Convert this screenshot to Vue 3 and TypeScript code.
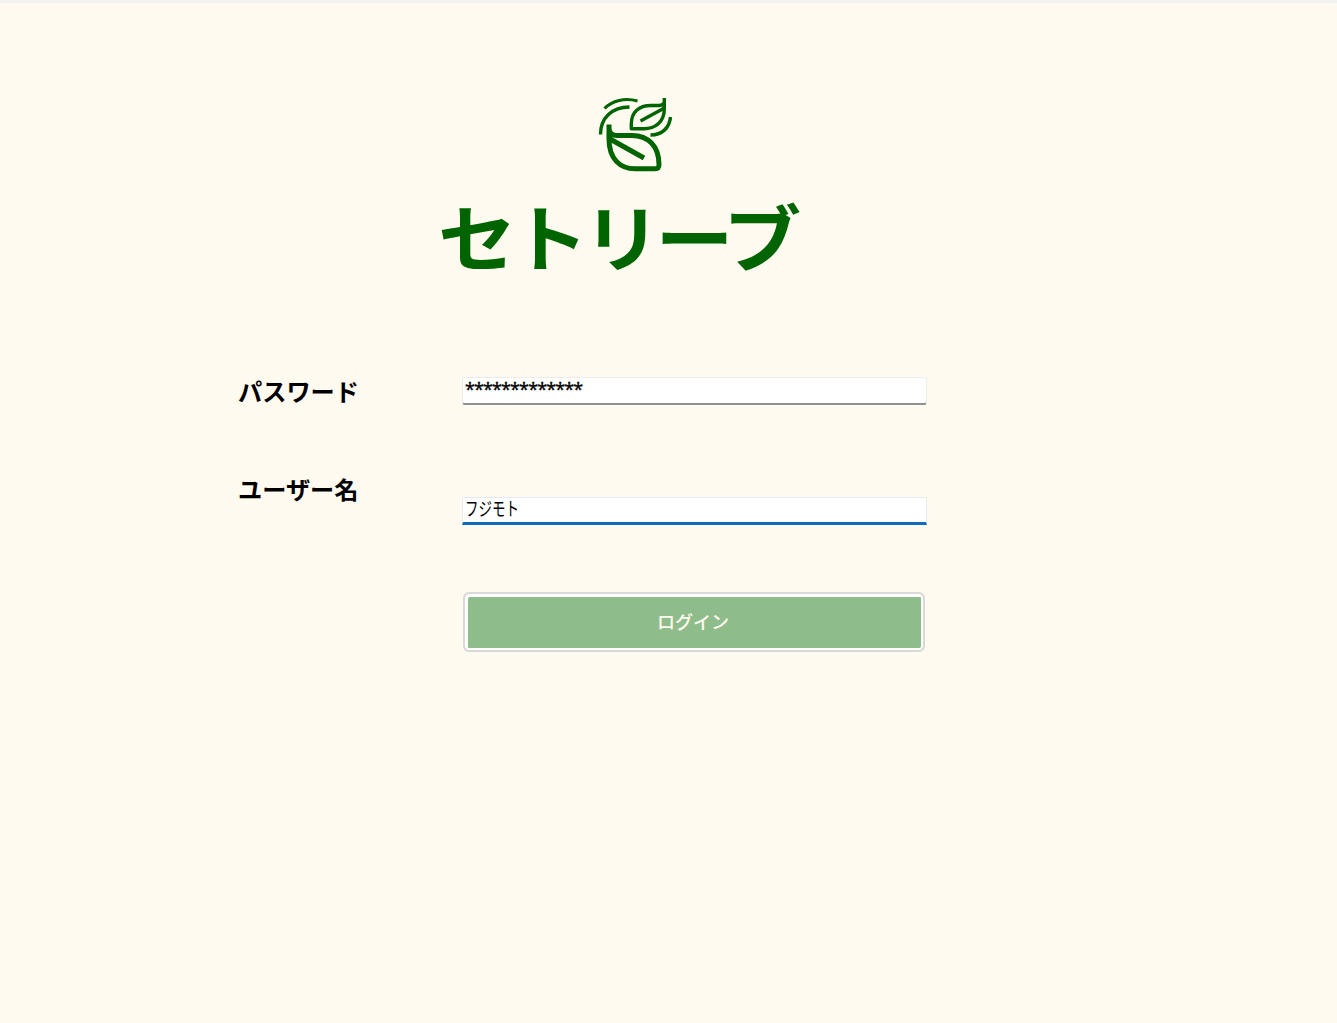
<script setup lang="ts">
import { ref } from 'vue'

const title = 'セトリーブ'
const password = ref('*************')
const userName = ref('フジモト')
</script>

<template>
  <main class="window">
    <header class="brand">
      <svg class="logo" viewBox="0 0 90 90" fill="none" stroke="#006400" stroke-linecap="butt" stroke-linejoin="round">
        <path stroke-width="3" d="M14.500 18.500C22 10.500 35 7.500 47.500 11" />
        <path stroke-width="3.400" d="M10.500 44.500C10.500 28 22 17 39.500 17" />
        <path stroke-width="3.400" d="M74.300 8V19C74.300 32 65 38.800 54 38.800H41.300V34C41.300 22 49 15.500 61 15.500H69C72 15.500 74.300 14 74.300 11" />
        <path stroke-width="3.400" d="M50.500 31L73.500 18.500" />
        <path stroke-width="3.400" d="M80.500 27C79.500 38 72 45 60.500 45" />
        <path stroke-width="5" d="M19 34.500V49C19 69 30 78.700 45 78.700H65C68 78.700 69 77.500 69 74.500C69 56 58 45.500 42 45.500H27C22 45.500 19 43 19 38" />
        <path stroke-width="5" d="M20 49L54 68" />
      </svg>
      <h1 class="title"><span>{{ title }}</span></h1>
    </header>

    <form class="form" @submit.prevent>
      <div class="row">
        <label class="label">パスワード</label>
        <div class="field" role="textbox"><span class="mask">{{ password }}</span></div>
      </div>
      <div class="row user">
        <label class="label">ユーザー名</label>
        <div class="field focused" role="textbox"><span class="name">{{ userName }}</span></div>
      </div>
      <button class="login" type="submit"><span>ログイン</span></button>
    </form>
  </main>
</template>

<style>
body {
  margin: 0;
  background: #fffaef;
}
</style>

<style scoped>
.window {
  box-sizing: border-box;
  height: 1023px;
  overflow: hidden;
  border-top: 3px solid #f2f2f2;
  background: #fffaef;
  font-family: "Noto Sans CJK JP", sans-serif;
}
.brand {
  height: 374px;
  padding-top: 87px;
  box-sizing: border-box;
}
.logo {
  display: block;
  width: 90px;
  height: 90px;
  margin-left: 590px;
}
.title {
  margin: 2px 0 0 438px;
  color: #006400;
  font-size: 78px;
  line-height: 104px;
  font-weight: 700;
  letter-spacing: -5.5px;
  white-space: nowrap;
}
.title span {
  display: inline-block;
  transform: scaleY(0.93);
}
.form {
  display: flex;
  flex-direction: column;
  margin-left: 238px;
}
.row {
  display: flex;
  align-items: flex-start;
  height: 98px;
}
.label {
  width: 224px;
  margin-top: -4px;
  color: #000;
  font-size: 24.2px;
  line-height: 36px;
  font-weight: 700;
  white-space: nowrap;
}
.field {
  box-sizing: border-box;
  width: 465px;
  height: 28px;
  padding-left: 2px;
  border: 1px solid #ececec;
  border-bottom: 2px solid #919191;
  border-radius: 3px;
  background: #fff;
  color: #000;
  font-size: 18px;
  line-height: 21px;
  white-space: nowrap;
}
.user {
  height: 117px;
}
.focused {
  margin-top: 22px;
  border-color: #e6eaf0;
  border-bottom: 3px solid #0f6cbd;
  border-radius: 2px 2px 0 0;
}
.mask {
  display: block;
  font-family: "Noto Sans", sans-serif;
  font-size: 18px;
  line-height: 22px;
  letter-spacing: -0.9px;
  -webkit-text-stroke: 0.3px #000;
}
.name {
  display: inline-block;
  transform: scale(0.75, 1.05);
  transform-origin: left;
}
.login {
  box-sizing: border-box;
  width: 462px;
  height: 60px;
  margin: 0 0 0 225px;
  padding: 0 2px 2px 0;
  border: 2px solid #d9d9d8;
  border-radius: 6px;
  background: #8fbc8b;
  box-shadow: inset 0 0 0 2px #fdfdfd, inset 1px 1px 0 2px #fdfdfd;
  color: #fffaef;
  font-family: inherit;
  font-size: 18px;
  line-height: 54px;
  font-weight: 500;
}
</style>
